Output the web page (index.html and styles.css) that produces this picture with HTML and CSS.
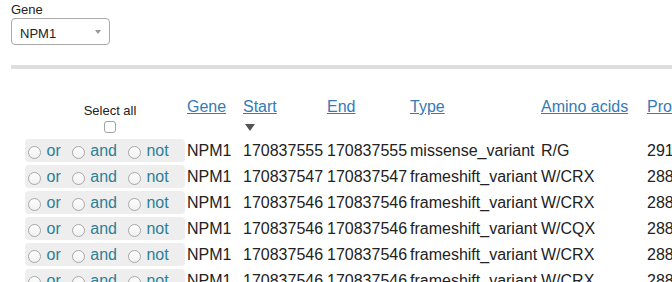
FILE: index.html
```html
<!DOCTYPE html>
<html>
<head>
<meta charset="utf-8">
<link rel="stylesheet" href="styles.css">
</head>
<body>
<div class="page">
  <div class="filter">
    <div class="filter-label">Gene</div>
    <div class="select"><span class="select-value">NPM1</span><span class="select-arrow"></span></div>
  </div>
  <div class="divider"></div>
  <table class="variants">
    <colgroup>
      <col class="c-sel"><col class="c-gene"><col class="c-start"><col class="c-end"><col class="c-type"><col class="c-aa"><col class="c-pro">
    </colgroup>
    <thead>
      <tr>
        <th class="th-select"><div class="select-all">Select all</div><span class="checkbox"></span></th>
        <th><a class="col-link">Gene</a></th>
        <th><a class="col-link">Start</a><span class="sort-arrow"></span></th>
        <th><a class="col-link">End</a></th>
        <th><a class="col-link">Type</a></th>
        <th><a class="col-link">Amino acids</a></th>
        <th><a class="col-link">Protein position</a></th>
      </tr>
    </thead>
    <tbody>
      <tr>
        <td class="ops"><div class="ops-box"><label class="op"><span class="radio"></span>or</label><label class="op"><span class="radio"></span>and</label><label class="op"><span class="radio"></span>not</label></div></td>
        <td>NPM1</td><td>170837555</td><td>170837555</td><td>missense_variant</td><td>R/G</td><td>291</td>
      </tr>
      <tr>
        <td class="ops"><div class="ops-box"><label class="op"><span class="radio"></span>or</label><label class="op"><span class="radio"></span>and</label><label class="op"><span class="radio"></span>not</label></div></td>
        <td>NPM1</td><td>170837547</td><td>170837547</td><td>frameshift_variant</td><td>W/CRX</td><td>288</td>
      </tr>
      <tr>
        <td class="ops"><div class="ops-box"><label class="op"><span class="radio"></span>or</label><label class="op"><span class="radio"></span>and</label><label class="op"><span class="radio"></span>not</label></div></td>
        <td>NPM1</td><td>170837546</td><td>170837546</td><td>frameshift_variant</td><td>W/CRX</td><td>288</td>
      </tr>
      <tr>
        <td class="ops"><div class="ops-box"><label class="op"><span class="radio"></span>or</label><label class="op"><span class="radio"></span>and</label><label class="op"><span class="radio"></span>not</label></div></td>
        <td>NPM1</td><td>170837546</td><td>170837546</td><td>frameshift_variant</td><td>W/CQX</td><td>288</td>
      </tr>
      <tr>
        <td class="ops"><div class="ops-box"><label class="op"><span class="radio"></span>or</label><label class="op"><span class="radio"></span>and</label><label class="op"><span class="radio"></span>not</label></div></td>
        <td>NPM1</td><td>170837546</td><td>170837546</td><td>frameshift_variant</td><td>W/CRX</td><td>288</td>
      </tr>
      <tr>
        <td class="ops"><div class="ops-box"><label class="op"><span class="radio"></span>or</label><label class="op"><span class="radio"></span>and</label><label class="op"><span class="radio"></span>not</label></div></td>
        <td>NPM1</td><td>170837546</td><td>170837546</td><td>frameshift_variant</td><td>W/CRX</td><td>288</td>
      </tr>
    </tbody>
  </table>
</div>
</body>
</html>
```
FILE: styles.css
```css
html, body {
  margin: 0;
  padding: 0;
  background: #fff;
  overflow: hidden;
}
body {
  font-family: "Liberation Sans", Arial, Helvetica, sans-serif;
  color: #222;
  width: 672px;
  height: 282px;
}
.page {
  padding: 2px 0 0 11px;
}
.filter-label {
  font-size: 13px;
  line-height: 15px;
  color: #222;
}
.select {
  margin-top: 1px;
  box-sizing: border-box;
  width: 99px;
  height: 27px;
  border: 1px solid #aaa;
  border-radius: 4px;
  display: flex;
  justify-content: space-between;
  padding: 6px 8px 0 8px;
  background: #fff;
}
.select-value {
  font-size: 13px;
  line-height: 18px;
}
.select-arrow {
  width: 0;
  height: 0;
  border-left: 3px solid transparent;
  border-right: 3px solid transparent;
  border-top: 4px solid #999;
  margin-top: 5px;
}
.divider {
  margin-top: 20px;
  height: 4px;
  background: #dedede;
}
.variants {
  margin-top: 26px;
  margin-left: 14px;
  table-layout: fixed;
  border-collapse: separate;
  border-spacing: 0 3px;
  width: 822px;
  font-size: 16px;
}
.c-sel { width: 162px; }
.c-gene { width: 56px; }
.c-start { width: 84px; }
.c-end { width: 83px; }
.c-type { width: 131px; }
.c-aa { width: 106px; }
.c-pro { width: 200px; }
.variants th {
  height: 37px;
  padding: 0;
  text-align: left;
  vertical-align: top;
  font-weight: normal;
  white-space: nowrap;
}
.variants th.th-select {
  text-align: center;
  padding-left: 8px;
}
.select-all {
  font-size: 13px;
  line-height: 15px;
  padding-top: 5px;
}
.checkbox {
  display: inline-block;
  box-sizing: border-box;
  width: 12px;
  height: 12px;
  margin-top: 3px;
  border: 1px solid #a3a3a3;
  border-radius: 3px;
  background: #fff;
  vertical-align: top;
}
.col-link {
  display: inline-block;
  color: #337ab7;
  text-decoration: underline;
  line-height: 18px;
  cursor: pointer;
}
.sort-arrow {
  display: block;
  width: 0;
  height: 0;
  margin: 8px 0 0 2px;
  border-left: 5px solid transparent;
  border-right: 5px solid transparent;
  border-top: 7px solid #555;
}
.variants td {
  height: 23px;
  padding: 0;
  line-height: 23px;
  white-space: nowrap;
  vertical-align: top;
}
.ops-box {
  width: 160px;
  height: 23px;
  box-sizing: border-box;
  background: #eee;
  border-radius: 4px;
  padding-left: 3px;
  display: flex;
  gap: 11px;
}
.op {
  color: #2d7f96;
  white-space: nowrap;
}
.radio {
  display: inline-block;
  box-sizing: border-box;
  width: 13px;
  height: 13px;
  border: 1px solid #a8a8a8;
  border-radius: 50%;
  background: linear-gradient(#fdfdfd, #f1f1f1);
  margin-right: 5.5px;
  vertical-align: -3px;
}
```
